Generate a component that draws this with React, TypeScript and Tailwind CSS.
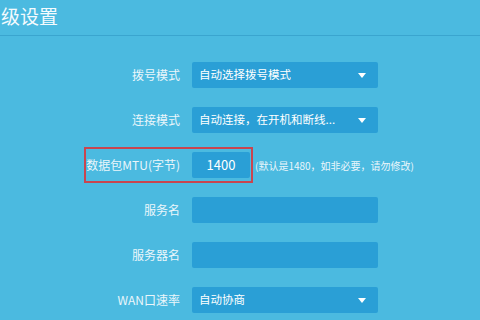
import React from 'react';

const FONT = { fontFamily: '"Noto Sans CJK SC", "Noto Sans", sans-serif' };

function Caret() {
  return (
    <svg width="8" height="5" viewBox="0 0 8 5" className="shrink-0">
      <path d="M0 0 L8 0 L4 5 Z" fill="#ffffff" />
    </svg>
  );
}

function Row({ label, children }: { label: string; children?: React.ReactNode }) {
  return (
    <div className="relative flex h-[26px] items-center">
      <div className="w-[180px] shrink-0 text-right text-[12px] leading-none text-[#eaf6fb]">
        {label}
      </div>
      <div className="ml-[12px] flex items-center">{children}</div>
    </div>
  );
}

function Select({ value }: { value: string }) {
  return (
    <div className="flex h-[26px] w-[186px] items-center justify-between rounded-[2px] bg-[#2a9fd6] pl-[7px] pr-[12px] text-[11.5px] text-white">
      <span className="truncate">{value}</span>
      <Caret />
    </div>
  );
}

function Input({ value = '' }: { value?: string }) {
  return (
    <div className="flex h-[26px] w-[186px] items-center rounded-[2px] bg-[#2a9fd6] px-[7px] text-[12px] text-white">
      {value}
    </div>
  );
}

export default function App() {
  return (
    <div className="h-[320px] w-[480px] overflow-hidden bg-[#4bbae0]" style={FONT}>
      {/* Title */}
      <div className="h-[36px] border-b border-[#3aa5cf] pt-[6px]">
        <h1 className="pl-[1px] text-[19px] leading-[20px] text-[#f4fbfe]">级设置</h1>
      </div>

      {/* Form */}
      <div className="mt-[26px] flex flex-col gap-[19px]">
        <Row label="拨号模式">
          <Select value="自动选择拨号模式" />
        </Row>
        <Row label="连接模式">
          <Select value="自动连接，在开机和断线..." />
        </Row>
        <Row label="数据包MTU(字节)">
          <div className="flex h-[26px] w-[58px] items-center justify-center rounded-[2px] bg-[#2a9fd6] text-[13px] text-white">
            1400
          </div>
          <span className="ml-[5px] text-[10px] text-[#eaf6fb]">(默认是1480，如非必要，请勿修改)</span>
          <div className="pointer-events-none absolute left-[84px] top-[-5px] h-[36px] w-[169px] border-2 border-[#c9454f]" />
        </Row>
        <Row label="服务名">
          <Input />
        </Row>
        <Row label="服务器名">
          <Input />
        </Row>
        <Row label="WAN口速率">
          <Select value="自动协商" />
        </Row>
      </div>
    </div>
  );
}
